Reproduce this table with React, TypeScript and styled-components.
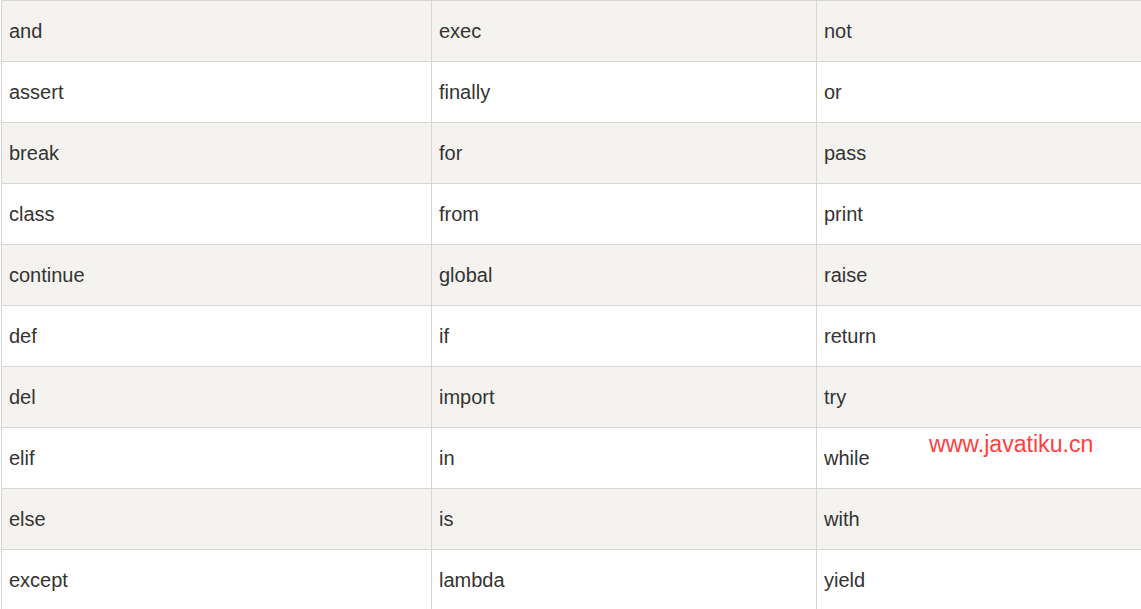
import React from "react";
import styled, { createGlobalStyle } from "styled-components";

const Global = createGlobalStyle`
  html, body { margin: 0; padding: 0; background: #fff; overflow: hidden; }
  body { font-family: "Liberation Sans", Arial, sans-serif; }
`;

const Page = styled.div`
  position: relative;
  width: 1141px;
  height: 609px;
  overflow: hidden;
`;

const Table = styled.table`
  margin-left: 1px;
  border-collapse: collapse;
  table-layout: fixed;
  width: 1200px;
  font-family: "Liberation Sans", Arial, sans-serif;
  font-size: 20px;
  color: #333;
`;

const Row = styled.tr<{ $striped: boolean }>`
  background: ${(p) => (p.$striped ? "#f4f3f0" : "#ffffff")};
`;

const Cell = styled.td`
  height: 60px;
  padding: 0 8px 0 7px;
  border-top: 1px solid #d6d6d6;
  border-left: 1px solid #d6d6d6;
  vertical-align: middle;
  line-height: 24px;
  white-space: nowrap;
`;

const Watermark = styled.div`
  position: absolute;
  left: 929px;
  top: 431px;
  font-family: "Liberation Sans", Arial, sans-serif;
  font-size: 23.1px;
  color: #ff4040;
`;

const rows: [string, string, string][] = [
  ["and", "exec", "not"],
  ["assert", "finally", "or"],
  ["break", "for", "pass"],
  ["class", "from", "print"],
  ["continue", "global", "raise"],
  ["def", "if", "return"],
  ["del", "import", "try"],
  ["elif", "in", "while"],
  ["else", "is", "with"],
  ["except", "lambda", "yield"],
];

export default function App() {
  return (
    <Page>
      <Global />
      <Table>
        <colgroup>
          <col style={{ width: 430 }} />
          <col style={{ width: 385 }} />
          <col />
        </colgroup>
        <tbody>
          {rows.map((r, i) => (
            <Row key={i} $striped={i % 2 === 0}>
              {r.map((c, j) => (
                <Cell key={j}>{c}</Cell>
              ))}
            </Row>
          ))}
        </tbody>
      </Table>
      <Watermark>www.javatiku.cn</Watermark>
    </Page>
  );
}
